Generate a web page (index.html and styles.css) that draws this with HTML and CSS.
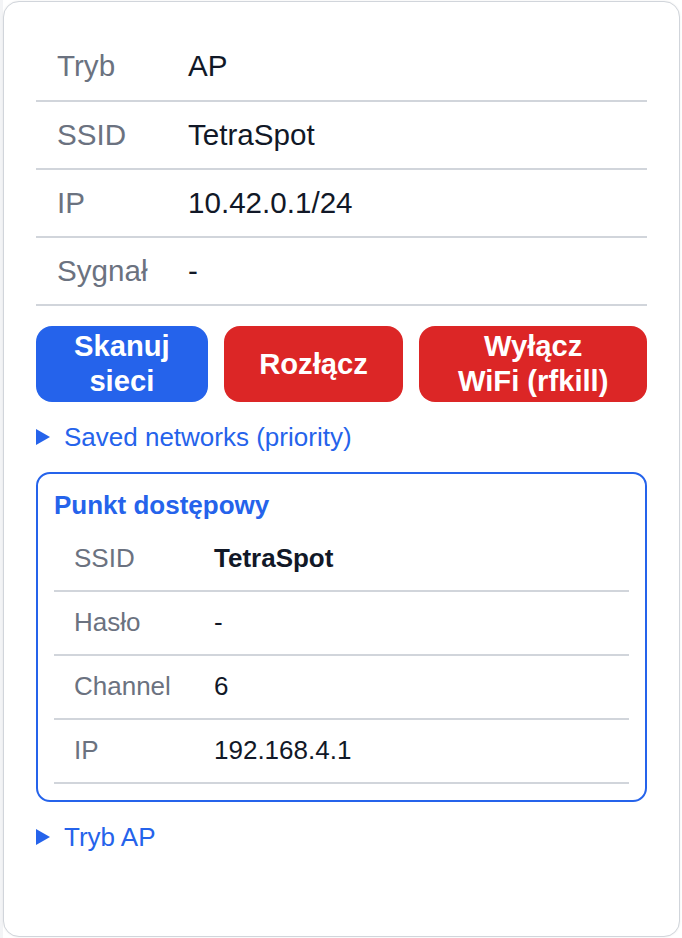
FILE: index.html
```html
<!DOCTYPE html>
<html lang="pl">
<head>
<meta charset="utf-8">
<title>WiFi</title>
<link rel="stylesheet" href="styles.css">
</head>
<body>
<div class="backdrop">
  <div class="card">
    <table class="info">
      <tr><td class="label">Tryb</td><td class="value">AP</td></tr>
      <tr><td class="label">SSID</td><td class="value">TetraSpot</td></tr>
      <tr><td class="label">IP</td><td class="value">10.42.0.1/24</td></tr>
      <tr><td class="label">Sygnał</td><td class="value">-</td></tr>
    </table>

    <div class="actions">
      <button class="btn btn-blue">Skanuj<br>sieci</button>
      <button class="btn btn-red">Rozłącz</button>
      <button class="btn btn-red">Wyłącz<br>WiFi (rfkill)</button>
    </div>

    <details class="disclosure">
      <summary><svg class="tri" width="14" height="16" viewBox="0 0 14 16"><path d="M0 0 L14 8 L0 16 Z" fill="#2563eb"/></svg>Saved networks (priority)</summary>
    </details>

    <section class="ap-box">
      <h3 class="ap-title">Punkt dostępowy</h3>
      <table class="info info-small">
        <tr><td class="label">SSID</td><td class="value strong">TetraSpot</td></tr>
        <tr><td class="label">Hasło</td><td class="value">-</td></tr>
        <tr><td class="label">Channel</td><td class="value">6</td></tr>
        <tr><td class="label">IP</td><td class="value">192.168.4.1</td></tr>
      </table>
    </section>

    <details class="disclosure disclosure-last">
      <summary><svg class="tri" width="14" height="16" viewBox="0 0 14 16"><path d="M0 0 L14 8 L0 16 Z" fill="#2563eb"/></svg>Tryb AP</summary>
    </details>
  </div>
</div>
</body>
</html>
```

FILE: styles.css
```css
* { box-sizing: border-box; }

html, body {
  margin: 0;
  padding: 0;
  background: #ffffff;
}

body {
  font-family: "Liberation Sans", Arial, sans-serif;
  color: #111827;
}

.backdrop {
  width: 682px;
  height: 938px;
  padding: 1px 2px 1px 3px;
  background: linear-gradient(to right, #f3f4f6 0, #f3f4f6 3px, #ffffff 3px);
}

.card {
  height: 936px;
  background: #ffffff;
  border: 1px solid #d1d5db;
  border-radius: 16px;
  padding: 31px 32px 32px 32px;
  box-shadow: 0 0 2px rgba(0,0,0,0.08);
}

.info {
  width: 100%;
  border-collapse: collapse;
  font-size: 29.6px;
  line-height: 1.15;
}

.info td {
  height: 68px;
  border-bottom: 2px solid #d1d5db;
  padding: 0;
  vertical-align: middle;
}

.info .label {
  width: 152px;
  padding-left: 21px;
  color: #6b7280;
}

.info .value {
  color: #111827;
}

.actions {
  display: grid;
  grid-template-columns: 172fr 180fr 228fr;
  gap: 16px;
  margin-top: 20px;
}

.btn {
  font-family: "Liberation Sans", Arial, sans-serif;
  font-weight: bold;
  font-size: 29.2px;
  line-height: 34.6px;
  color: #ffffff;
  border: none;
  border-radius: 16px;
  padding: 3px 6px;
  height: 76px;
  text-align: center;
}

.btn-blue { background: #2563eb; }
.btn-red { background: #dc2626; }

.disclosure {
  margin-top: 20px;
  font-size: 26px;
  line-height: 30px;
  color: #2563eb;
}

.disclosure summary {
  list-style: none;
  display: flex;
  align-items: center;
  cursor: pointer;
}

.disclosure summary::-webkit-details-marker { display: none; }

.tri {
  margin-right: 14px;
  flex: none;
  width: 14px;
  height: 16px;
}

.ap-box {
  margin-top: 20px;
  border: 2px solid #2563eb;
  border-radius: 14px;
  padding: 16px 16px 16px 16px;
}

.ap-title {
  margin: 0 0 7px 0;
  font-size: 26px;
  line-height: 30px;
  font-weight: bold;
  color: #2563eb;
}

.info-small {
  font-size: 26px;
}

.info-small td {
  height: 64px;
}

.info-small .label {
  width: 160px;
  padding-left: 20px;
}

.info-small .strong {
  font-weight: bold;
}

.disclosure-last {
  margin-top: 20px;
}
```
